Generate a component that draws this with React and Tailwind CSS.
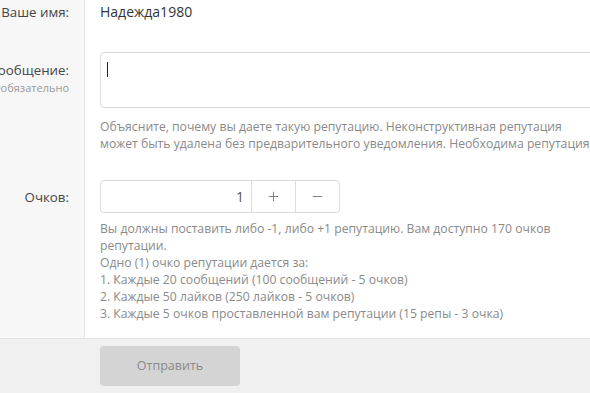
import React from 'react';
import { Plus, Minus } from 'lucide-react';

const Label = ({ children, sub, className = '' }) => (
  <div className={`w-[85px] shrink-0 overflow-hidden bg-[#f7f7f7] border-r border-[#e4e4e4] flex justify-end pr-[15px] ${className}`}>
    <div className="flex flex-col items-end whitespace-nowrap">
      <span className="text-[13.3px] leading-[18px] text-[#454545]">{children}</span>
      {sub && <span className="text-[11px] leading-[15px] text-[#9a9a9a] mt-[1px]">{sub}</span>}
    </div>
  </div>
);

const App = () => {
  return (
    <div className="w-[590px] h-[393px] overflow-hidden bg-[#f0f0f0] flex flex-col" style={{ fontFamily: '"Open Sans", "Noto Sans", sans-serif' }}>
      <div className="bg-white">
        {/* name */}
        <div className="flex">
          <Label className="pt-[3px]">Ваше имя:</Label>
          <div className="pl-[15px] pt-[3px] pb-[16px] text-[14px] leading-[18px] text-[#333]">Надежда1980</div>
        </div>

        {/* message */}
        <div className="flex">
          <Label className="pt-[24px]" sub="Необязательно">Сообщение:</Label>
          <div className="pl-[15px] pt-[15px] pb-[11px] w-[515px] shrink-0">
            <div className="h-[56px] w-full rounded-[4px] border border-[#dcdcdc] px-[6px] pt-[9px]">
              <div className="w-px h-[15px] bg-[#222]" />
            </div>
            <p className="mt-[10px] text-[12.2px] leading-[17px] text-[#8a8a8a]">
              Объясните, почему вы даете такую репутацию. Неконструктивная репутация может быть удалена без предварительного уведомления. Необходима репутация.
            </p>
          </div>
        </div>

        {/* points */}
        <div className="flex">
          <Label className="pt-[25px]">Очков:</Label>
          <div className="pl-[15px] pt-[17px] pb-[16px] w-[515px] shrink-0">
            <div className="flex w-[240px] h-[33px] rounded-[4px] border border-[#dcdcdc] text-[#555]">
              <div className="w-[150px] flex items-center justify-end pr-[7px] text-[14px]">1</div>
              <div className="w-[44px] border-l border-[#dcdcdc] flex items-center justify-center">
                <Plus size={15} strokeWidth={1.3} className="text-[#666]" />
              </div>
              <div className="flex-1 border-l border-[#dcdcdc] flex items-center justify-center">
                <Minus size={15} strokeWidth={1.3} className="text-[#666]" />
              </div>
            </div>
            <div className="mt-[7px] text-[12.2px] leading-[17px] text-[#8a8a8a]">
              <p>Вы должны поставить либо -1, либо +1 репутацию. Вам доступно 170 очков репутации.</p>
              <p>Одно (1) очко репутации дается за:</p>
              <p>1. Каждые 20 сообщений (100 сообщений - 5 очков)</p>
              <p>2. Каждые 50 лайков (250 лайков - 5 очков)</p>
              <p>3. Каждые 5 очков проставленной вам репутации (15 репы - 3 очка)</p>
            </div>
          </div>
        </div>
      </div>

      {/* footer */}
      <div className="flex-1 border-t border-[#e4e4e4] bg-[#f0f0f0] pl-[100px] pt-[7px]">
        <button className="w-[140px] h-[40px] rounded-[4px] bg-[#d4d4d4] text-[12.5px] text-[#8a8a8a]">Отправить</button>
      </div>
    </div>
  );
};

export default App;
